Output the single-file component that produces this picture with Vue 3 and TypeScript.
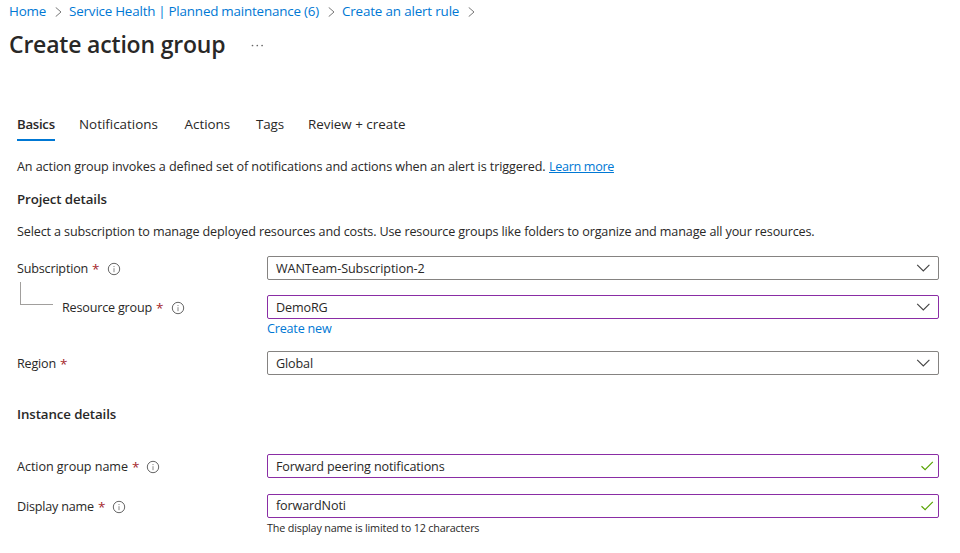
<script setup lang="ts">
import { ref } from 'vue'

interface Tab { id: string; label: string }

const crumbs = [
  { id: 'home', label: 'Home' },
  { id: 'health', label: 'Service Health | Planned maintenance (6)' },
  { id: 'rule', label: 'Create an alert rule' },
]
const tabs: Tab[] = [
  { id: 'basics', label: 'Basics' },
  { id: 'notifications', label: 'Notifications' },
  { id: 'actions', label: 'Actions' },
  { id: 'tags', label: 'Tags' },
  { id: 'review', label: 'Review + create' },
]
const activeTab = ref('basics')

const projectFields = [
  { id: 'subscription', label: 'Subscription', value: 'WANTeam-Subscription-2', info: true, edited: false, link: '' },
  { id: 'group', label: 'Resource group', value: 'DemoRG', info: true, edited: true, link: 'Create new' },
  { id: 'region', label: 'Region', value: 'Global', info: false, edited: false, link: '' },
]
const instanceFields = ref([
  { id: 'action', label: 'Action group name', value: 'Forward peering notifications', hint: '' },
  { id: 'display', label: 'Display name', value: 'forwardNoti', hint: 'The display name is limited to 12 characters' },
])
</script>

<template>
  <main class="page">
    <nav class="crumbs">
      <template v-for="c in crumbs" :key="c.id">
        <a class="crumb" :class="c.id">{{ c.label }}</a>
        <svg class="sep" width="7" height="10" viewBox="0 0 7 10"><path d="M.7.4 6 5 .7 9.6" /></svg>
      </template>
    </nav>

    <header class="heading">
      <h1>Create action group</h1>
      <svg class="more" width="13" height="3" viewBox="0 0 13 3">
        <circle cx="1.5" cy="1.5" r=".85" /><circle cx="6.3" cy="1.5" r=".85" /><circle cx="11.1" cy="1.5" r=".85" />
      </svg>
    </header>

    <div class="tabs">
      <button v-for="t in tabs" :key="t.id" class="tab" :class="[t.id, { active: t.id === activeTab }]" @click="activeTab = t.id">{{ t.label }}</button>
    </div>

    <p class="text intro"><span class="intro-text">An action group invokes a defined set of notifications and actions when an alert is triggered.</span><a class="learn">Learn more</a></p>
    <h2>Project details</h2>
    <p class="text manage">Select a subscription to manage deployed resources and costs. Use resource groups like folders to organize and manage all your resources.</p>

    <section>
      <div v-for="f in projectFields" :key="f.id" class="field" :class="f.id">
        <div class="label">
          <span v-if="f.id === 'group'" class="branch"></span>
          <span class="caption">{{ f.label }}</span><span class="star">*</span>
          <svg v-if="f.info" class="info" width="14" height="14" viewBox="0 0 14 14"><circle cx="7" cy="7" r="5.7" /><path d="M7 6.2v4M7 4v1.1" /></svg>
        </div>
        <div class="control">
          <div class="box" :class="{ edited: f.edited }">
            <span class="value">{{ f.value }}</span>
            <svg class="chevron" width="14" height="8" viewBox="0 0 14 8"><path d="M1.2.8 7.3 7 13.4.8" /></svg>
          </div>
          <a v-if="f.link" class="link">{{ f.link }}</a>
        </div>
      </div>
    </section>

    <h2 class="instance">Instance details</h2>

    <section>
      <div v-for="f in instanceFields" :key="f.id" class="field" :class="f.id">
        <div class="label">
          <span class="caption">{{ f.label }}</span><span class="star">*</span>
          <svg class="info" width="14" height="14" viewBox="0 0 14 14"><circle cx="7" cy="7" r="5.7" /><path d="M7 6.2v4M7 4v1.1" /></svg>
        </div>
        <div class="control">
          <div class="box edited">
            <input v-model="f.value" type="text" spellcheck="false" />
            <svg class="check" width="13" height="10" viewBox="0 0 13 10"><path d="M.5 5.2 4.1 8.6 11.8.9" /></svg>
          </div>
          <span v-if="f.hint" class="hint">{{ f.hint }}</span>
        </div>
      </div>
    </section>
  </main>
</template>

<style>
body { margin: 0; background: #fff; overflow: hidden; }
</style>

<style scoped>
.page { box-sizing: border-box; width: 960px; height: 553px; overflow: hidden; color: #292827; background: #fff; font: 12.6px/20px "Open Sans", "Noto Sans", sans-serif; letter-spacing: -0.137px; }
.crumbs { display: flex; align-items: center; height: 24px; padding-left: 9px; font-size: 13.4px; white-space: nowrap; letter-spacing: -0.16px; }
.crumb { height: 20px; padding-bottom: 2px; color: #0078d4; }
.crumb.home { width: 46px; }
.crumb.health { width: 259px; word-spacing: -0.4px; }
.crumb.rule { width: 126px; }
.sep { margin-right: 7px; fill: none; stroke: #777; stroke-width: 1; }
.heading { display: flex; align-items: center; height: 42px; padding-left: 9px; }
h1 { width: 242px; margin: 0; padding-bottom: 2px; font-size: 23px; line-height: 32px; font-weight: 600; letter-spacing: -0.19px; white-space: nowrap; }
.more { fill: #666; }
.tabs { display: flex; gap: 24px; margin: 44px 0 0 17px; height: 31px; }
.tab { box-sizing: border-box; height: 31px; padding: 1px 0 2px; border: 0; border-bottom: 2px solid transparent; background: none; color: inherit; font: 13.4px/26px "Open Sans", "Noto Sans", sans-serif; text-align: left; white-space: nowrap; }
.tab.active { width: 38px; border-color: #0078d4; font-size: 13.2px; font-weight: 600; letter-spacing: -0.27px; }
.tab.notifications { width: 81.5px; }
.tab.actions { width: 47.5px; }
.tab.tags { width: 28px; letter-spacing: -0.1px; }
.text { margin: 0 0 0 17px; white-space: nowrap; }
.intro { display: flex; margin-top: 16px; letter-spacing: -0.1px; }
.intro-text { width: 532px; }
.learn { color: #0078d4; text-decoration: underline; text-underline-offset: 1px; letter-spacing: -0.33px; }
h2 { margin: 12px 0 0 17px; font-size: 13.3px; line-height: 20px; font-weight: 600; letter-spacing: -0.11px; }
.manage { margin-top: 13px; }
.field { display: grid; grid-template-columns: 250px 672px; align-items: start; margin-left: 17px; }
.label { position: relative; display: flex; align-items: center; box-sizing: border-box; height: 26px; }
.label .caption { letter-spacing: -0.19px; }
.action .label .caption { letter-spacing: -0.06px; }
.star { width: 7px; margin-left: 4px; color: #a4262c; font-size: 13.5px; }
.info { margin-left: 7.5px; fill: none; stroke: #666; stroke-width: 1; }
.info path { stroke: #888; }
.box { box-sizing: border-box; display: flex; align-items: center; justify-content: space-between; height: 24px; padding: 0 8px; border: 1px solid #858381; border-radius: 2px; }
.box.edited { border-color: #8a2da5; }
.value { padding-top: 2px; }
.subscription .value { letter-spacing: -0.08px; }
.chevron { fill: none; stroke: #444; stroke-width: 1.1; }
.check { margin-right: -4px; fill: none; stroke: #57a300; stroke-width: 1.2; }
input { flex: 1; min-width: 0; height: 20px; padding: 0; border: 0; outline: 0; background: none; color: inherit; font: inherit; letter-spacing: inherit; }
.subscription { margin-top: 14px; }
.group { margin-top: 13px; }
.group .label { padding-left: 45px; }
.branch { position: absolute; left: 3px; top: -13px; box-sizing: border-box; width: 33px; height: 23px; border: solid #a19f9d; border-width: 0 0 1px 1px; }
.link { display: block; height: 18px; padding-top: 1px; line-height: 18px; color: #0078d4; letter-spacing: -0.2px; }
.region { margin-top: 13px; }
.instance { margin-top: 27px; }
.action { margin-top: 30px; }
.action input { padding-top: 2px; }
.display { margin-top: 14px; }
.hint { display: block; font-size: 10.8px; letter-spacing: -0.18px; line-height: 20px; }
</style>
